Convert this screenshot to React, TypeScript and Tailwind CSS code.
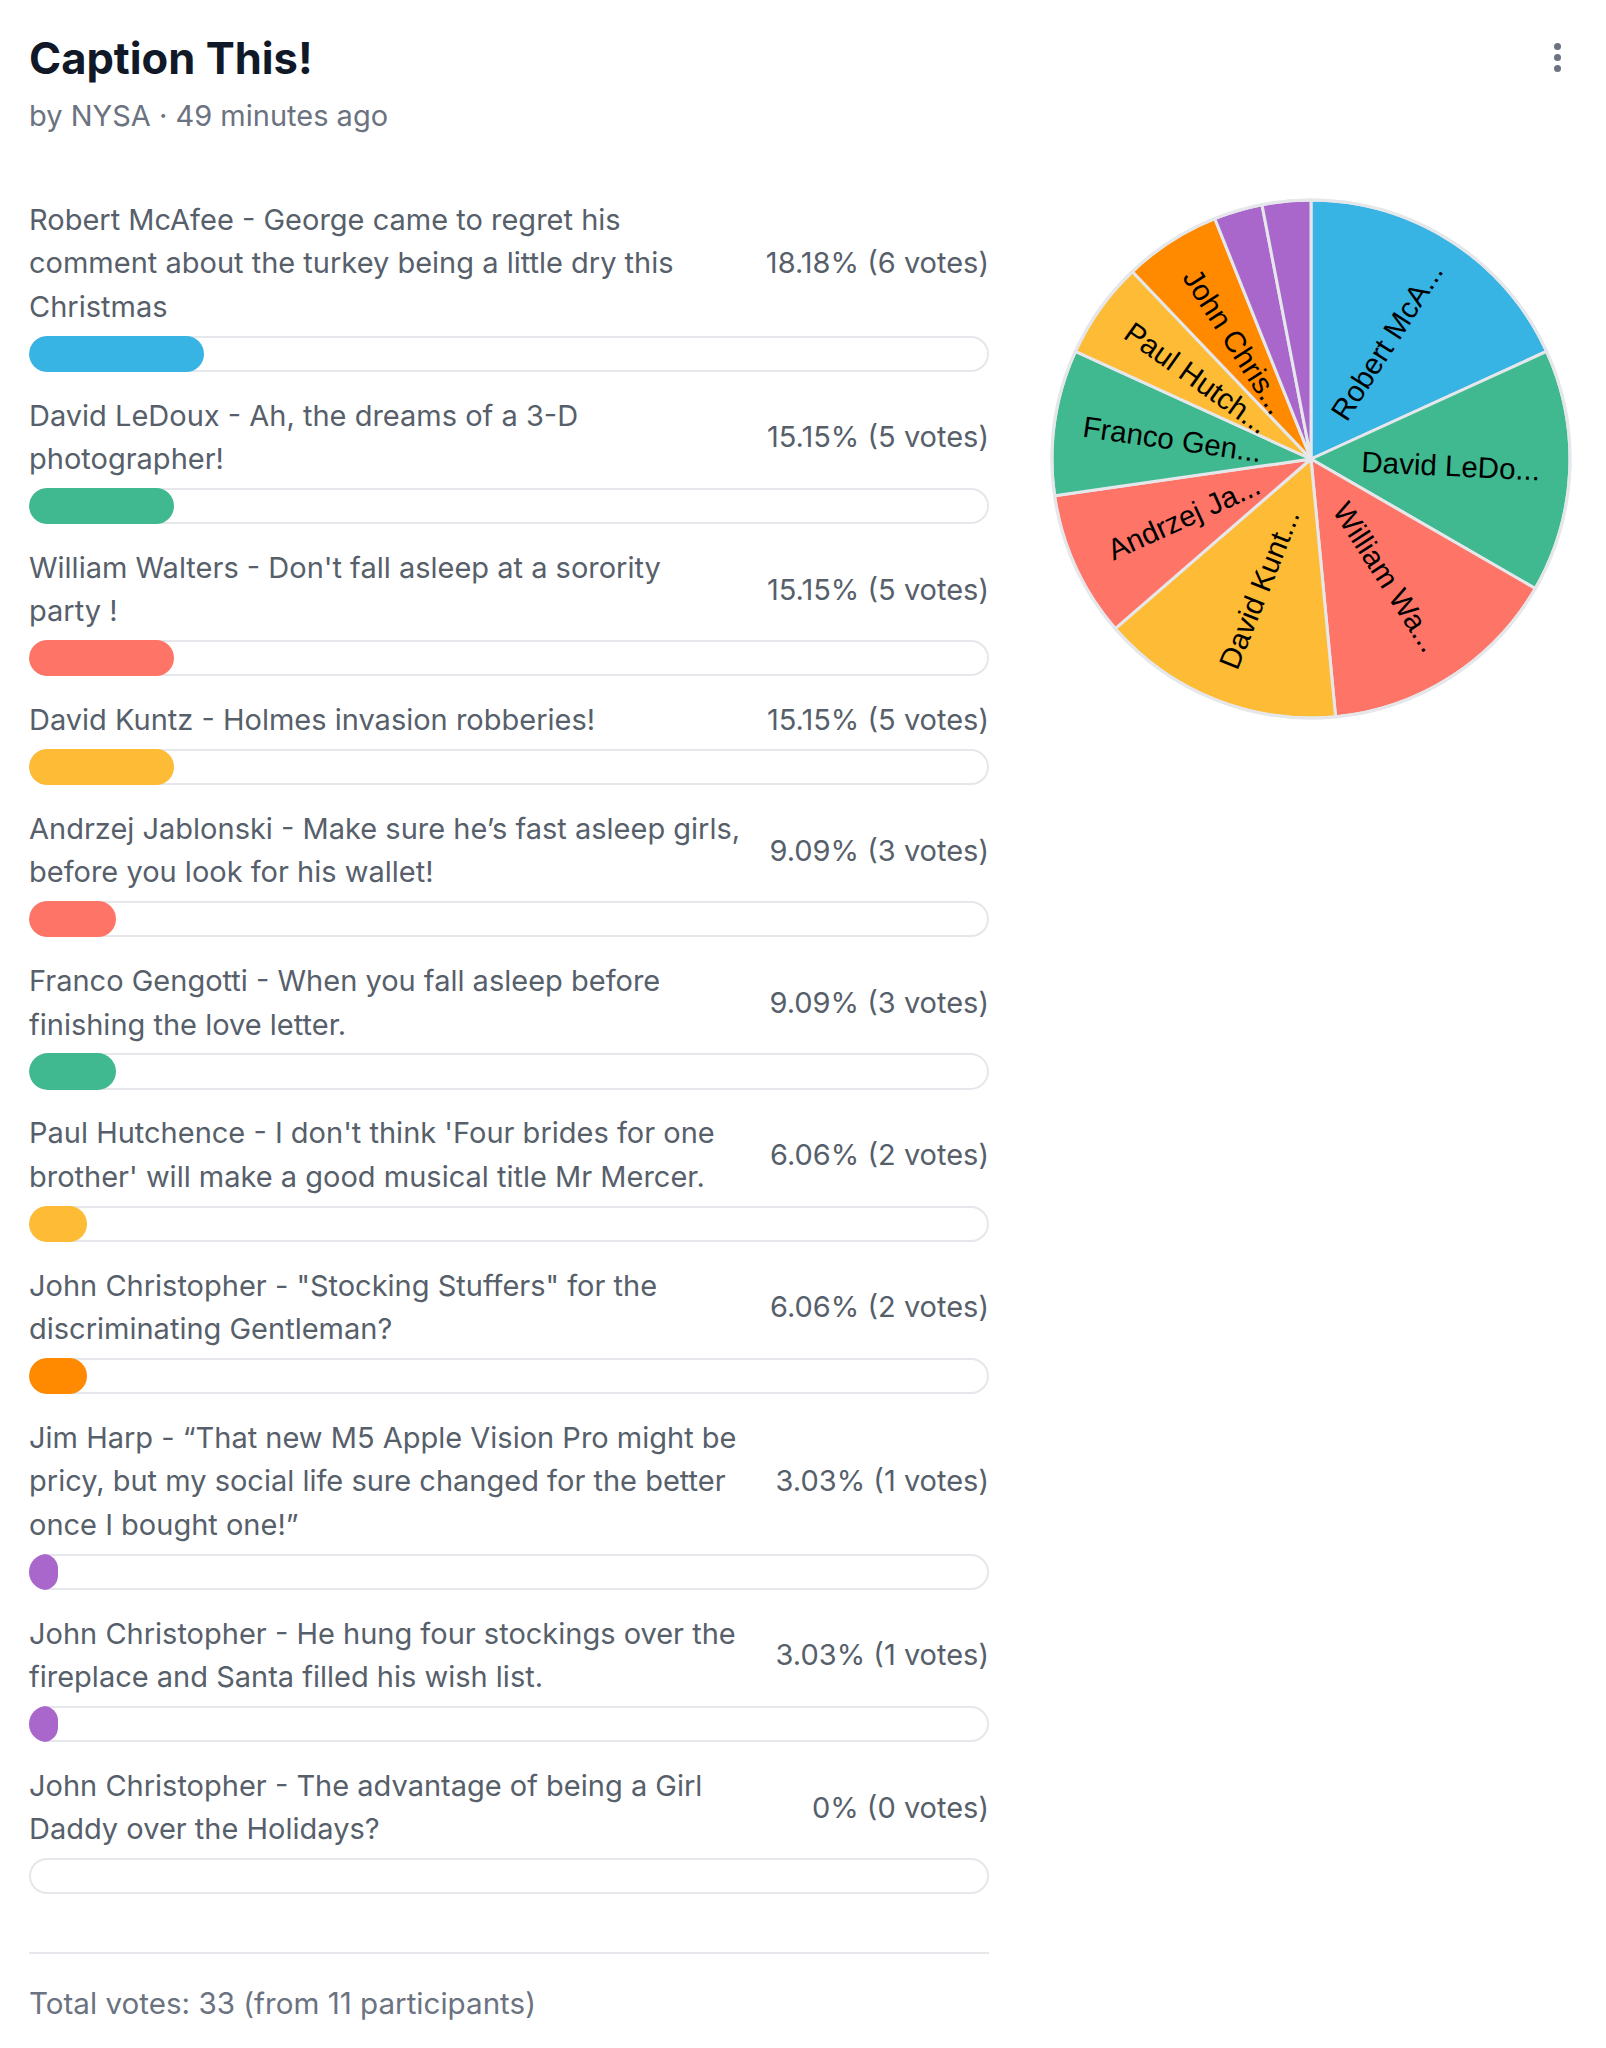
import React from "react";

type Opt = { text: string; name: string; pct: string; votes: number; color: string };

const BLUE = "#37b4e4";
const GREEN = "#40b990";
const RED = "#fe7567";
const YELLOW = "#fdbb36";
const ORANGE = "#ff8a00";
const PURPLE = "#a967cc";

const options: Opt[] = [
  { text: "Robert McAfee - George came to regret his comment about the turkey being a little dry this Christmas", name: "Robert McAfee", pct: "18.18%", votes: 6, color: BLUE },
  { text: "David LeDoux - Ah, the dreams of a 3-D photographer!", name: "David LeDoux", pct: "15.15%", votes: 5, color: GREEN },
  { text: "William Walters - Don't fall asleep at a sorority party !", name: "William Walters", pct: "15.15%", votes: 5, color: RED },
  { text: "David Kuntz - Holmes invasion robberies!", name: "David Kuntz", pct: "15.15%", votes: 5, color: YELLOW },
  { text: "Andrzej Jablonski - Make sure he\u2019s fast asleep girls, before you look for his wallet!", name: "Andrzej Jablonski", pct: "9.09%", votes: 3, color: RED },
  { text: "Franco Gengotti - When you fall asleep before finishing the love letter.", name: "Franco Gengotti", pct: "9.09%", votes: 3, color: GREEN },
  { text: "Paul Hutchence - I don't think 'Four brides for one brother' will make a good musical title Mr Mercer.", name: "Paul Hutchence", pct: "6.06%", votes: 2, color: YELLOW },
  { text: "John Christopher - \"Stocking Stuffers\" for the discriminating Gentleman?", name: "John Christopher", pct: "6.06%", votes: 2, color: ORANGE },
  { text: "Jim Harp - \u201cThat new M5 Apple Vision Pro might be pricy, but my social life sure changed for the better once I bought one!\u201d", name: "Jim Harp", pct: "3.03%", votes: 1, color: PURPLE },
  { text: "John Christopher - He hung four stockings over the fireplace and Santa filled his wish list.", name: "John Christopher", pct: "3.03%", votes: 1, color: PURPLE },
  { text: "John Christopher - The advantage of being a Girl Daddy over the Holidays?", name: "John Christopher", pct: "0%", votes: 0, color: PURPLE },
];

const TOTAL = 33;

function Pie() {
  const size = 524;
  const cx = size / 2;
  const cy = size / 2;
  const r = 259;
  let acc = 0;
  const slices: React.ReactNode[] = [];
  const labels: React.ReactNode[] = [];
  options.forEach((o, i) => {
    if (o.votes === 0) return;
    const a0 = (acc / TOTAL) * 2 * Math.PI;
    acc += o.votes;
    const a1 = (acc / TOTAL) * 2 * Math.PI;
    const x0 = cx + r * Math.sin(a0);
    const y0 = cy - r * Math.cos(a0);
    const x1 = cx + r * Math.sin(a1);
    const y1 = cy - r * Math.cos(a1);
    const large = a1 - a0 > Math.PI ? 1 : 0;
    slices.push(
      <path
        key={i}
        d={`M ${cx} ${cy} L ${x0} ${y0} A ${r} ${r} 0 ${large} 1 ${x1} ${y1} Z`}
        fill={o.color}
        stroke="#e5e7eb"
        strokeWidth={3}
        strokeLinejoin="round"
      />
    );
    if (o.votes >= 2) {
      const mid = (a0 + a1) / 2;
      const deg = (mid * 180) / Math.PI;
      const d = 140;
      const lx = cx + d * Math.sin(mid);
      const ly = cy - d * Math.cos(mid);
      const rot = deg < 180 ? deg - 90 : deg + 90;
      const label = o.name.length > 10 ? o.name.slice(0, 10) + "..." : o.name;
      labels.push(
        <text
          key={"l" + i}
          x={lx}
          y={ly}
          textAnchor="middle"
          dominantBaseline="central"
          transform={`rotate(${rot} ${lx} ${ly})`}
          fontFamily="'Liberation Sans', Arial, sans-serif"
          fontSize={29.5}
          fill="#000000"
        >
          {label}
        </text>
      );
    }
  });
  return (
    <svg width={size} height={size} viewBox={`0 0 ${size} ${size}`}>
      <circle cx={cx} cy={cy} r={r} fill="#e5e7eb" />
      {slices}
      <circle cx={cx} cy={cy} r={r} fill="none" stroke="#e5e7eb" strokeWidth={3} />
      {labels}
    </svg>
  );
}

export default function App() {
  return (
    <div
      className="min-h-[2048px] w-full bg-white px-[29px] pt-[29px] pb-[20px]"
      style={{ fontFamily: "Inter, 'Noto Sans', sans-serif" }}
    >
      <div className="flex items-start justify-between">
        <div>
          <h1 className="text-[43.5px] leading-[58px] font-bold text-[#111827]">Caption This!</h1>
          <div className="mt-[7.25px] text-[29px] leading-[43.5px] text-[#6b7280]">
            by NYSA · 49 minutes ago
          </div>
        </div>
        <div className="mt-[14px] mr-[16px] flex flex-col items-center gap-[4px]">
          <span className="block h-[7px] w-[7px] rounded-full bg-[#6b7280]" />
          <span className="block h-[7px] w-[7px] rounded-full bg-[#6b7280]" />
          <span className="block h-[7px] w-[7px] rounded-full bg-[#6b7280]" />
        </div>
      </div>

      <div className="mt-[60px] flex gap-[56px]">
        <div className="w-[960px] shrink-0">
          <div className="flex flex-col gap-[21.75px]">
            {options.map((o, i) => {
              const w = (o.votes / TOTAL) * 100;
              return (
                <div key={i}>
                  <div className="flex items-center text-[29px] leading-[43.5px] text-[#575f6b]">
                    <div className="flex-1">{o.text}</div>
                    <div className="ml-[29px] shrink-0 whitespace-nowrap">
                      {o.pct} ({o.votes} votes)
                    </div>
                  </div>
                  <div className="mt-[7.25px] h-[36.25px] overflow-hidden rounded-full bg-white shadow-[inset_0_0_0_2px_#e5e7eb]">
                    {o.votes > 0 && (
                      <div
                        className="h-full rounded-full"
                        style={{ width: `${w}%`, backgroundColor: o.color }}
                      />
                    )}
                  </div>
                </div>
              );
            })}
          </div>
          <div className="mt-[58px] border-t-[2px] border-[#e5e7eb] pt-[28px] text-[29.6px] leading-[43.5px] text-[#6b7280]">
            Total votes: 33 (from 11 participants)
          </div>
        </div>
        <div className="flex flex-1 justify-center">
          <div className="-mt-[1px]">
            <Pie />
          </div>
        </div>
      </div>
    </div>
  );
}
